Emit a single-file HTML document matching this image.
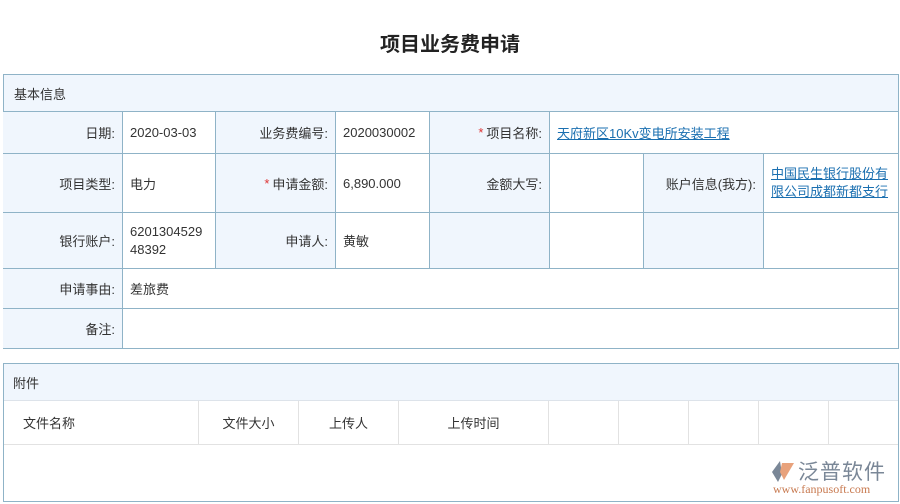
<!DOCTYPE html>
<html><head><meta charset="utf-8"><style>
body{margin:0;width:900px;height:504px;background:#fff;font-family:"Liberation Sans","Noto Sans CJK SC",sans-serif;font-size:13px;color:#333;position:relative;overflow:hidden}
.a{position:absolute;box-sizing:border-box}
.t{left:0;width:900px;top:28px;text-align:center;font-size:20px;font-weight:bold;color:#222}
.c{border-right:1px solid #8fb3c7;border-bottom:1px solid #8fb3c7;display:flex;align-items:center;padding:0 7px}
.l{background:#f0f6fd;justify-content:flex-end}
.r{color:#d33;margin-right:3px}
a{color:#1a6fb0;text-decoration:underline}
.g{border-right:1px solid #e2e2e2;display:flex;align-items:center;box-sizing:border-box}
</style></head><body>
<div class="a t">项目业务费申请</div>
<div class="a" style="left:3px;top:74px;width:896px;height:275px;border:1px solid #8fb3c7;border-right:none;border-bottom:none"></div>
<div class="a c" style="left:3px;top:74px;width:896px;height:38px;background:#f0f6fd;border-left:1px solid #8fb3c7;border-top:1px solid #8fb3c7;padding-left:10px">基本信息</div>
<div class="a c l" style="left:3px;top:112px;width:120px;height:42px">日期:</div>
<div class="a c" style="left:123px;top:112px;width:93px;height:42px">2020-03-03</div>
<div class="a c l" style="left:216px;top:112px;width:120px;height:42px">业务费编号:</div>
<div class="a c" style="left:336px;top:112px;width:94px;height:42px">2020030002</div>
<div class="a c l" style="left:430px;top:112px;width:120px;height:42px"><span class="r">*</span>项目名称:</div>
<div class="a c" style="left:550px;top:112px;width:349px;height:42px"><a>天府新区10Kv变电所安装工程</a></div>
<div class="a c l" style="left:3px;top:154px;width:120px;height:59px">项目类型:</div>
<div class="a c" style="left:123px;top:154px;width:93px;height:59px">电力</div>
<div class="a c l" style="left:216px;top:154px;width:120px;height:59px"><span class="r">*</span>申请金额:</div>
<div class="a c" style="left:336px;top:154px;width:94px;height:59px">6,890.000</div>
<div class="a c l" style="left:430px;top:154px;width:120px;height:59px">金额大写:</div>
<div class="a c" style="left:550px;top:154px;width:94px;height:59px"></div>
<div class="a c l" style="left:644px;top:154px;width:120px;height:59px">账户信息(我方):</div>
<div class="a c" style="left:764px;top:154px;width:135px;height:59px;line-height:18px"><a>中国民生银行股份有限公司成都新都支行</a></div>
<div class="a c l" style="left:3px;top:213px;width:120px;height:56px">银行账户:</div>
<div class="a c" style="left:123px;top:213px;width:93px;height:56px;line-height:18px;word-break:break-all">620130452948392</div>
<div class="a c l" style="left:216px;top:213px;width:120px;height:56px">申请人:</div>
<div class="a c" style="left:336px;top:213px;width:94px;height:56px">黄敏</div>
<div class="a c l" style="left:430px;top:213px;width:120px;height:56px"></div>
<div class="a c" style="left:550px;top:213px;width:94px;height:56px"></div>
<div class="a c l" style="left:644px;top:213px;width:120px;height:56px"></div>
<div class="a c" style="left:764px;top:213px;width:135px;height:56px"></div>
<div class="a c l" style="left:3px;top:269px;width:120px;height:40px">申请事由:</div>
<div class="a c" style="left:123px;top:269px;width:776px;height:40px">差旅费</div>
<div class="a c l" style="left:3px;top:309px;width:120px;height:40px">备注:</div>
<div class="a c" style="left:123px;top:309px;width:776px;height:40px"></div>
<div class="a" style="left:3px;top:363px;width:896px;height:139px;border:1px solid #8fb3c7"></div>
<div class="a" style="left:4px;top:364px;width:894px;height:37px;background:#f0f6fd;border-bottom:1px solid #dde3ea;display:flex;align-items:center;padding-left:9px">附件</div>
<div class="a" style="left:4px;top:401px;width:894px;height:44px;border-bottom:1px solid #e2e2e2;display:flex">
<div class="g" style="width:195px;padding-left:19px">文件名称</div>
<div class="g" style="width:100px;justify-content:center">文件大小</div>
<div class="g" style="width:100px;justify-content:center">上传人</div>
<div class="g" style="width:150px;justify-content:center">上传时间</div>
<div class="g" style="width:70px"></div><div class="g" style="width:70px"></div><div class="g" style="width:70px"></div><div class="g" style="width:70px"></div>
</div>
<div class="a" style="left:770px;top:458px;width:125px;height:40px">
<svg class="a" style="left:0;top:0" width="26" height="26" viewBox="0 0 26 26"><path d="M10 3 L2 14 L8 24 L12 16 Z" fill="#7a8797"/><path d="M12 5 L24 5 L14 22 L10 14 Z" fill="#e8a27c"/></svg>
<div class="a" style="left:28px;top:-2px;font-size:21px;color:#7a8797;letter-spacing:1px">泛普软件</div>
<div class="a" style="left:3px;top:24px;font-size:12px;color:#c87a50;font-family:'Liberation Serif',serif">www.fanpusoft.com</div>
</div>
</body></html>
